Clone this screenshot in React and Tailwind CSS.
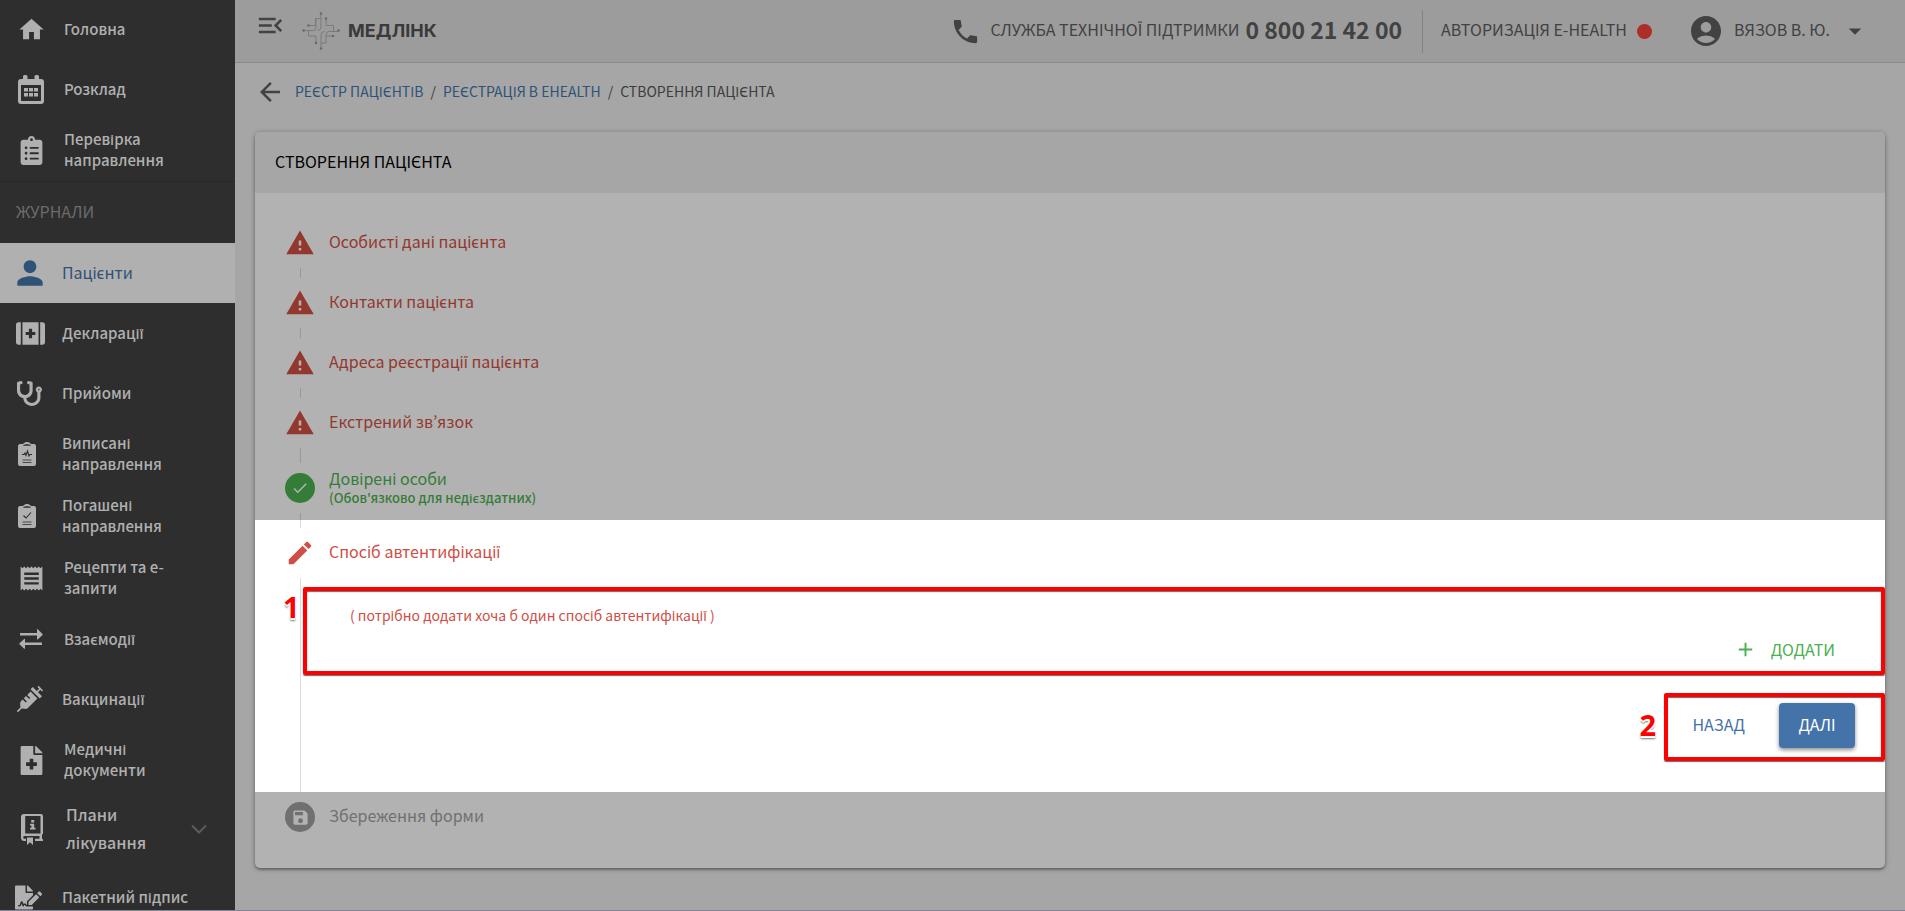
import { FaClipboardList, FaFirstAid, FaSyringe, FaFileMedical, FaFileSignature, FaStethoscope } from 'react-icons/fa';
import {
  MdHome, MdPerson, MdReceipt, MdMenuOpen, MdPhone, MdAccountCircle, MdArrowDropDown,
  MdArrowBack, MdWarning, MdCheck, MdEdit, MdSave, MdAdd,
} from 'react-icons/md';

function CalendarIcon() {
  return (
    <svg width="26" height="29" viewBox="0 0 26 29" fill="currentColor">
      <path fillRule="evenodd" d="M5 1.500a1.500 1.500 0 0 1 1.500-1.500H8a1.500 1.500 0 0 1 1.500 1.500V4h7V1.500A1.500 1.500 0 0 1 18 0h1.500A1.500 1.500 0 0 1 21 1.500V4h2a3 3 0 0 1 3 3v19a3 3 0 0 1-3 3H3a3 3 0 0 1-3-3V7a3 3 0 0 1 3-3h2V1.500ZM3 10v15.500c0 .3.200.5.500.500h19c.3 0 .5-.2.500-.500V10H3Z" />
      <path d="M6 13h4v3.500H6zM11 13h4v3.500h-4zM16 13h4v3.500h-4zM6 18h4v3.500H6zM11 18h4v3.500h-4zM16 18h4v3.500h-4z" />
    </svg>
  );
}

function ClipboardIcon({ mark }) {
  return (
    <svg width="18" height="24" viewBox="0 0 18 24" fill="none">
      <path d="M2 2h3l1-1a5 5 0 0 1 6 0l1 1h3a2 2 0 0 1 2 2v18a2 2 0 0 1-2 2H2a2 2 0 0 1-2-2V4a2 2 0 0 1 2-2Z" fill="currentColor" />
      <path d="M5 3.800 6 2.600h1.500q1.500-1.400 3 0H12l1 1.200z" fill="#2e2e2e" />
      <path d={mark} stroke="#2e2e2e" strokeWidth="1.100" />
      <path d="M4.500 18h9M4.500 20.500h9" stroke="#2e2e2e" strokeWidth="0.800" />
    </svg>
  );
}

function PulseClipboardIcon() {
  return <ClipboardIcon mark="M4 12.500h2l1-1.500 1 2.500L9.500 9l1.500 5 1-1.500h2" />;
}

function CheckClipboardIcon() {
  return <ClipboardIcon mark="M5.500 11.500 8 14l5-5.500" />;
}

function ExchangeIcon() {
  return (
    <svg width="24" height="20" viewBox="0 0 24 20" fill="currentColor">
      <path d="M1 4h17V.600c0-.5.500-.7.800-.4L23.500 5c.3.3.3.600 0 .9l-4.700 4.500c-.3.300-.8.100-.8-.4V6.500H1z" />
      <path d="M23 13.500H6v-3.200c0-.5-.5-.7-.8-.4L.500 14.300c-.3.300-.3.600 0 .9l4.700 4.500c.3.300.8.100.8-.4V16h17z" />
    </svg>
  );
}

function BookIcon() {
  return (
    <svg width="22" height="31" viewBox="0 0 22 31" fill="currentColor">
      <path fillRule="evenodd" d="M3 0h17a2 2 0 0 1 2 2v17.500l-1 1.300v3.600l1 1V27h-8v-2.200h4.500V22H3.600a1.400 1.400 0 0 0 0 2.800H5V27H3.500A3.500 3.500 0 0 1 0 23.500V3a3 3 0 0 1 3-3Zm1.200 2v17.400h15.300V2H4.200Z" />
      <path d="M10.200 6h3v2.600h-3zM9 9.700h4.200v4H14.500v1.800H9v-1.800h1.400v-2.300H9z" />
      <path d="M6 23.500h6V31l-3-2.800L6 31z" />
    </svg>
  );
}

const MENU_TOP = [
  { label: 'Головна', icon: <MdHome size={29} />, size: 'h-[60px]', slot: 'w-[62px]' },
  { label: 'Розклад', icon: <CalendarIcon />, size: 'h-[60px]', slot: 'w-[62px]' },
  { label: 'Перевірка направлення', icon: <FaClipboardList size={29} />, size: 'h-[62px]', slot: 'w-[62px]' },
];

const MENU_JOURNALS = [
  { label: 'Пацієнти', icon: <MdPerson size={38} />, size: 'h-[60px]', slot: 'w-[60px]', active: true },
  { label: 'Декларації', icon: <FaFirstAid size={29} />, size: 'h-[60px]', slot: 'w-[60px]' },
  { label: 'Прийоми', icon: <FaStethoscope size={25} />, size: 'h-[60px]', slot: 'w-[58px] mr-[2px]' },
  { label: 'Виписані направлення', icon: <PulseClipboardIcon />, size: 'h-[62px]', slot: 'w-[54px] mr-[6px]' },
  { label: 'Погашені направлення', icon: <CheckClipboardIcon />, size: 'h-[62px]', slot: 'w-[54px] mr-[6px]' },
  { label: 'Рецепти та е-запити', icon: <MdReceipt size={29} />, size: 'h-[62px]', slot: 'w-[62px]' },
  { label: 'Взаємодії', icon: <ExchangeIcon />, size: 'h-[60px]', slot: 'w-[62px]' },
  { label: 'Вакцинації', icon: <FaSyringe size={26} />, size: 'h-[60px]', slot: 'w-[60px]' },
  { label: 'Медичні документи', icon: <FaFileMedical size={29} />, size: 'h-[62px]', slot: 'w-[62px]' },
  { label: 'Плани лікування', icon: <BookIcon />, size: 'h-[76px]', slot: 'w-[64px]', expandable: true },
  { label: 'Пакетний підпис', icon: <FaFileSignature size={27} />, size: 'h-[60px]', slot: 'w-[56px] mr-[4px]' },
];

const INVALID_STEPS = [
  'Особисті дані пацієнта',
  'Контакти пацієнта',
  'Адреса реєстрації пацієнта',
  'Екстрений зв’язок',
];

function labelStyle(item) {
  if (item.active) return 'text-[16px]';
  if (item.expandable) return 'w-24 text-[16px] leading-7 font-medium';
  return 'w-[134px] text-[15px] leading-[21px] font-medium';
}

function MenuItem({ item }) {
  return (
    <a
      href="#"
      className={`flex shrink-0 items-center ${item.size} ${item.active ? 'bg-[#b0b0b0] text-[#2f5277]' : 'text-[#b0b0b0]'}`}
    >
      <span className={`flex shrink-0 justify-center ${item.slot}`}>{item.icon}</span>
      <span className={`ml-[2px] pb-[2px] ${labelStyle(item)}`}>{item.label}</span>
      {item.expandable && (
        <svg className="mr-7 ml-auto text-[#5c5c5c]" width="16" height="10" viewBox="0 0 16 10" fill="none" stroke="currentColor" strokeWidth="2">
          <path d="M1 1.500l7 7 7-7" />
        </svg>
      )}
    </a>
  );
}

function Sidebar() {
  return (
    <nav className="flex w-[235px] shrink-0 flex-col overflow-hidden bg-[#2e2e2e]">
      <div className="-mt-px flex shrink-0 flex-col border-b border-[#272727]">
        {MENU_TOP.map((item) => <MenuItem key={item.label} item={item} />)}
      </div>
      <div className="flex h-[61px] shrink-0 items-center px-4 pb-1 text-[16px] text-[#6b6b6b]">ЖУРНАЛИ</div>
      {MENU_JOURNALS.map((item) => <MenuItem key={item.label} item={item} />)}
    </nav>
  );
}

function Logo() {
  return (
    <svg width="38" height="38" viewBox="0 0 38 38" fill="none" stroke="#7b7b7b" strokeWidth="1">
      <path d="M19 2v13M14 7v8.500q0 3-3 3H1.500M19 15q0 3.500-3.500 3.500M19 36V23M24 31v-8.500q0-3 3-3h9.500M19 23q0-3.500 3.500-3.500" />
      <path d="M24 7v6.500h7.500V19M24 24h6.500M14 31v-7H6.500v-5M7 13.500h6.500V6.500H19M24 31h-5" />
      <g fill="#6a6a6a" stroke="none">
        <circle cx="19" cy="1.500" r="1.300" /><circle cx="24" cy="6.500" r="1.300" />
        <circle cx="19" cy="36.500" r="1.300" /><circle cx="14" cy="31" r="1.300" />
        <circle cx="1.500" cy="18.500" r="1.300" /><circle cx="6.500" cy="13.500" r="1.300" />
        <circle cx="36.500" cy="18.500" r="1.300" /><circle cx="31" cy="24" r="1.300" />
      </g>
    </svg>
  );
}

function Header() {
  return (
    <header className="flex h-[63px] shrink-0 items-center border-b border-[#8b8b8b] bg-[#9c9c9c] text-[16px] text-[#424242]">
      <button type="button" aria-label="Згорнути меню" className="mb-[11px] ml-5">
        <MdMenuOpen size={31} />
      </button>
      <a href="#" className="ml-4 flex items-center gap-2">
        <Logo />
        <span className="pb-[2px] font-['Inter',sans-serif] text-[18px] font-bold text-[#3a3a3a]">МЕДЛІНК</span>
      </a>
      <div className="ml-auto flex items-center">
        <MdPhone size={31} />
        <span className="ml-[9px] pb-1">СЛУЖБА ТЕХНІЧНОЇ ПІДТРИМКИ</span>
        <a href="tel:0800214200" className="ml-[6px] pb-1 text-[23px] leading-8 font-bold">0 800 21 42 00</a>
        <span className="ml-5 h-[43px] w-px bg-[#838383]" />
        <span className="ml-[18px] pb-1">АВТОРИЗАЦІЯ E-HEALTH</span>
        <span className="ml-[10px] size-[15px] rounded-full bg-[#ad2d27]" />
        <button type="button" className="mr-[35px] ml-9 flex items-center">
          <MdAccountCircle size={36} />
          <span className="ml-[10px] pb-1">ВЯЗОВ В. Ю.</span>
          <MdArrowDropDown size={30} className="ml-[10px]" />
        </button>
      </div>
    </header>
  );
}

function Breadcrumbs() {
  return (
    <div className="flex h-[58px] items-center gap-[10px] text-[14px] text-[#3d3d3d]">
      <button type="button" aria-label="Назад" className="text-[#424242]"><MdArrowBack size={30} /></button>
      <div className="flex gap-[7px] pb-[2px]">
        <a href="#" className="text-[#2f5277]">РЕЄСТР ПАЦІЄНТІВ</a>
        <span>/</span>
        <a href="#" className="text-[#2f5277]">РЕЄСТРАЦІЯ В EHEALTH</a>
        <span>/</span>
        <span>СТВОРЕННЯ ПАЦІЄНТА</span>
      </div>
    </div>
  );
}

function StepHeader({ icon, children, note, className }) {
  return (
    <div className={`flex h-[50px] items-center pl-[30px] ${className}`}>
      <span className="mr-[14px] flex w-[30px] shrink-0 justify-center">{icon}</span>
      <span className={`flex flex-col leading-5 ${note ? '' : 'pb-[5px]'}`}>
        {children}
        {note && <span className="text-[13px] font-medium">{note}</span>}
      </span>
    </div>
  );
}

function Marker({ className, children }) {
  return (
    <span className={`absolute font-['Open_Sans','Noto_Sans',sans-serif] text-[29px] leading-8 font-bold text-[#fe0000] [text-shadow:-2px_0_#fff,2px_0_#fff,0_-2px_#fff,0_2px_#fff,0_3px_2px_#777] ${className}`}>
      {children}
    </span>
  );
}

export default function App() {
  return (
    <div className="flex h-screen overflow-hidden border-b border-[#85868f] bg-[#a6a6a6] font-['Noto_Sans_CJK_KR','Noto_Sans',sans-serif]">
      <Sidebar />
      <div className="flex min-w-0 flex-1 flex-col">
        <Header />
        <main className="px-5">
          <Breadcrumbs />
          <section className="mt-[11px] rounded-[5px] bg-[#b2b2b2] text-[16px] shadow-[0_1px_5px_rgba(0,0,0,0.35),0_2px_2px_rgba(0,0,0,0.2)]">
            <h1 className="flex h-[61px] items-center rounded-t-[5px] bg-[#a6a6a6] px-5 pb-[3px] text-black">СТВОРЕННЯ ПАЦІЄНТА</h1>

            <div className="pt-[25px]">
              {INVALID_STEPS.map((label, i) => (
                <div key={label}>
                  <StepHeader icon={<MdWarning size={30} />} className="text-[#93382f]">{label}</StepHeader>
                  <div className={`ml-[45px] w-px bg-[#999] ${i === 3 ? 'h-[15px]' : 'h-[10px]'}`} />
                </div>
              ))}
              <StepHeader
                className="text-[#367c39]"
                icon={<span className="flex size-[30px] items-center justify-center rounded-full bg-[#367c39] text-[#b2b2b2]"><MdCheck size={18} /></span>}
                note="(Обов'язково для недієздатних)"
              >
                Довірені особи
              </StepHeader>
              <div className="ml-[45px] h-[7px] w-px bg-[#999]" />
            </div>

            <div className="bg-white">
              <div className="ml-[45px] h-2 w-px bg-[#dcdcdc]" />
              <StepHeader icon={<MdEdit size={30} />} className="text-[#d04e45]">Спосіб автентифікації</StepHeader>
              <div className="ml-[45px] flex flex-col border-l border-[#dcdcdc] pt-[9px] pb-[31px] pl-[2px]">
                <div className="relative flex flex-col rounded-[2px] border-4 border-[#fe0000] pt-[14px] pr-[46px] pb-[10px] pl-[43px] leading-5 shadow-[0_1px_1px_#666,inset_0_1px_1px_#666]">
                  <Marker className="top-0 -left-6">1</Marker>
                  <p className="text-[14px] text-[#d04e45]">( потрібно додати хоча б один спосіб автентифікації )</p>
                  <button type="button" className="mt-[13px] flex items-center gap-[14px] self-end text-[#4caf50]">
                    <MdAdd size={23} />
                    <span className="pb-[2px]">ДОДАТИ</span>
                  </button>
                </div>
                <div className="relative mt-[18px] flex items-center self-end rounded-[2px] border-4 border-[#fe0000] pt-[6px] pr-[26px] pb-[9px] pl-6 shadow-[0_1px_1px_#666,inset_0_1px_1px_#666]">
                  <Marker className="top-3 -left-[29px]">2</Marker>
                  <button type="button" className="pb-[3px] text-[#4373a8]">НАЗАД</button>
                  <button type="button" className="ml-[34px] h-[45px] w-[76px] rounded-[4px] bg-[#4373a8] pb-[3px] text-white shadow-[0_2px_4px_rgba(0,0,0,0.45)]">ДАЛІ</button>
                </div>
              </div>
            </div>

            <div className="pb-[26px]">
              <StepHeader
                className="text-[#707070]"
                icon={<span className="flex size-[30px] items-center justify-center rounded-full bg-[#707070] text-[#b2b2b2]"><MdSave size={19} /></span>}
              >
                Збереження форми
              </StepHeader>
            </div>
          </section>
        </main>
      </div>
    </div>
  );
}
